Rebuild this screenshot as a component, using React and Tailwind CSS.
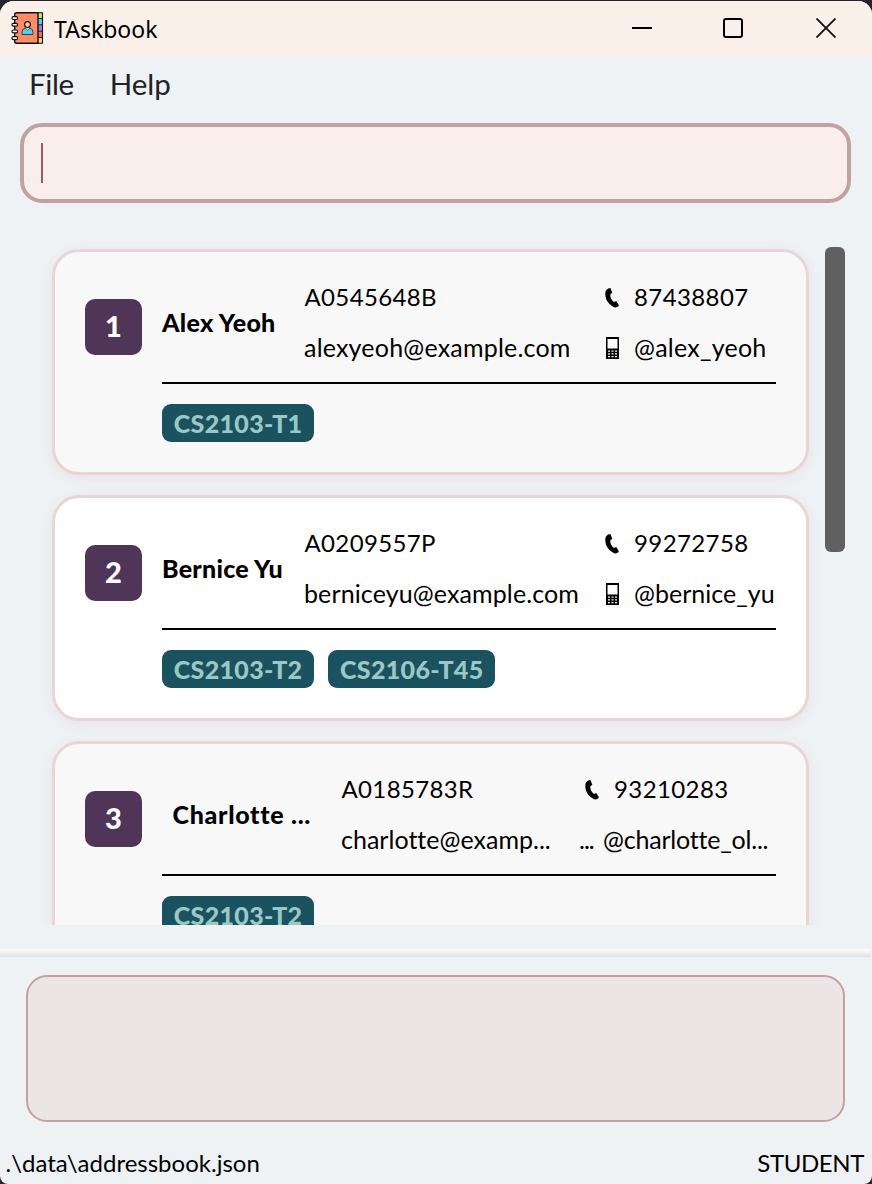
const students = [
  {
    index: 1,
    name: "Alex Yeoh",
    id: "A0545648B",
    email: "alexyeoh@example.com",
    phone: "87438807",
    handle: "@alex_yeoh",
    tags: ["CS2103-T1"],
    bg: "bg-[#f8f8f8]",
    nameCol: "w-[142px] tracking-[0.3px]",
    infoCol: "w-[299px]",
    emailText: "tracking-[0.2px]",
    handleText: "tracking-[0.25px]",
  },
  {
    index: 2,
    name: "Bernice Yu",
    id: "A0209557P",
    email: "berniceyu@example.com",
    phone: "99272758",
    handle: "@bernice_yu",
    tags: ["CS2103-T2", "CS2106-T45"],
    bg: "bg-white",
    nameCol: "w-[142px] tracking-[0.25px]",
    infoCol: "w-[299px]",
    emailText: "tracking-[0.12px]",
    handleText: "tracking-[0.02px]",
  },
  {
    index: 3,
    name: "Charlotte ...",
    id: "A0185783R",
    email: "charlotte@examp...",
    phone: "93210283",
    handle: "@charlotte_ol...",
    tags: ["CS2103-T2"],
    bg: "bg-[#f8f8f8]",
    nameCol: "w-[179px] pl-[10.500px] tracking-[0.7px]",
    infoCol: "w-[242px]",
    emailText: "tracking-[0.02px]",
    handleText: "tracking-[-0.2px]",
    truncated: true,
  },
];

function BookIcon() {
  return (
    <svg width="34" height="34" viewBox="0 0 34 34" className="ml-[10px] mb-[3px]">
      <path d="M28 1.5h4.5v31H28z" fill="#ffd35c" />
      <path d="M28 1.5h4.5v6H28z" fill="#cbe558" />
      <path d="M28 7.5h4.5v6.3H28z" fill="#4cd3ee" />
      <path d="M28 13.8h4.5v6.4H28z" fill="#a97fd0" />
      <path d="M28 20.2h4.5v6.3H28z" fill="#ff5c7c" />
      <path d="M28 7.5h4.5M28 13.8h4.5M28 20.2h4.5M28 26.5h4.5" stroke="#111" strokeWidth="0.9" />
      <path d="M28 1.7h4.500v30.600H28" fill="none" stroke="#111" strokeWidth="1.1" />
      <path d="M6.500 1.700h21.500v30.600h-21.500q-1.800 0-1.800-1.800v-27q0-1.800 1.800-1.800z" fill="#ff8c66" stroke="#111" strokeWidth="1.4" />
      <path d="M12 23.500v-2.200q0-3.600 3.200-4.100l2.300 1.900 2.300-1.900q3.200.5 3.200 4.100v2.200z" fill="#52d1ee" stroke="#1b3540" strokeWidth="0.9" />
      <path d="M16.200 16.200h2.600v1.900l-1.300 1-1.300-1z" fill="#ffc7ae" />
      <circle cx="17.5" cy="13.6" r="2.9" fill="#ffc7ae" stroke="#111" strokeWidth="1.2" />
      <g fill="#fff" stroke="#111" strokeWidth="1.2">
        <rect x="2" y="5.6" width="5.6" height="2.9" rx="1.4" />
        <rect x="2" y="12.3" width="5.6" height="2.9" rx="1.4" />
        <rect x="2" y="19" width="5.6" height="2.9" rx="1.4" />
        <rect x="2" y="25.7" width="5.6" height="2.9" rx="1.4" />
      </g>
    </svg>
  );
}

function PhoneIcon() {
  return (
    <svg width="14" height="20" viewBox="0 0 14 20">
      <path
        d="M3.2.5 5.4 0l1.9 4.7-2 1.5q-.2 2.7 1 4.7t2.6 3l2.3-.8 2.6 3.8-.6 1.6-2.4 1Q7.500 19.200 3.800 15.200T.3 5.500Q.3 2 3.200.5Z"
        fill="#000"
      />
    </svg>
  );
}

function MobileIcon() {
  return (
    <svg width="14" height="22" viewBox="0 0 14 22">
      <path d="M1 0h13v22H1zM2.500 2v9.500h10V2z" fill="#000" fillRule="evenodd" />
      <path
        d="M3 13.500h2v1.300H3zM6.500 13.500h2v1.300h-2zM10 13.500h2v1.300h-2zM3 16.200h2v1.300H3zM6.500 16.200h2v1.300h-2zM10 16.200h2v1.300h-2zM3 19h2v1.300H3zM6.500 19h2v1.300h-2zM10 19h2v1.300h-2z"
        fill="#f8f8f8"
      />
    </svg>
  );
}

function StudentCard({ s }) {
  return (
    <article
      className={`flex h-[226px] w-[757px] shrink-0 rounded-[27px] border-[3px] border-[#e8d6d6] pl-[30px] shadow-[0_3px_12px_rgba(200,160,160,0.18)] ${s.bg}`}
    >
      <div className="mt-[47px] flex h-14 w-[57px] items-center justify-center rounded-[10px] bg-[#4f3558] pb-[3px] text-[29px] font-black text-white">
        {s.index}
      </div>
      <div className="ml-5 flex w-[614px] flex-col pt-5">
        <div className="flex h-[110px] whitespace-nowrap">
          <div className={`flex h-[100px] items-center text-[25px] font-black ${s.nameCol}`}>{s.name}</div>
          <div className={`flex flex-col ${s.infoCol}`}>
            <div className="flex h-[50px] items-center pl-[0.5px] tracking-[0.35px]">{s.id}</div>
            <div className={`flex h-[50px] items-center text-[25px] ${s.emailText}`}>{s.email}</div>
          </div>
          <div className="flex flex-col">
            <div className="flex h-[50px] items-center pl-0.5 tracking-[0.4px]">
              <span className="w-[29px] pt-px">
                <PhoneIcon />
              </span>
              {s.phone}
            </div>
            <div className={`flex h-[50px] items-center text-[25px] ${s.handleText} ${s.truncated ? "-ml-[4px]" : "pl-0.5"}`}>
              {s.truncated ? (
                <span className="w-6 tracking-[-1px]">...</span>
              ) : (
                <span className="w-[29px] pt-px">
                  <MobileIcon />
                </span>
              )}
              {s.handle}
            </div>
          </div>
        </div>
        <div className="h-0.5 bg-black" />
        <div className="mt-5 flex gap-[14px]">
          {s.tags.map((t) => (
            <span
              key={t}
              className="flex h-[38px] items-center rounded-[9px] bg-[#1a535f] px-[11.800px] text-[25px] font-black tracking-[0.33px] text-[#9bc8c6]"
            >
              {t}
            </span>
          ))}
        </div>
      </div>
    </article>
  );
}

export default function App() {
  return (
    <div className="h-[1184px] w-[872px] bg-[#26232a] pt-px font-['Lato','Liberation_Sans',sans-serif] text-[24px] leading-none text-black">
      <div className="flex h-[1183px] flex-col overflow-hidden rounded-t-[14px] rounded-b-[8px] bg-[#eef2f5]">
        <header className="flex h-14 shrink-0 items-center bg-[#f9f1e9]">
          <BookIcon />
          <h1 className="ml-[10px] grow font-['Noto_Sans','Open_Sans',sans-serif] text-[23px]">TAskbook</h1>
          <svg width="20" height="20" viewBox="0 0 20 20" className="mb-[3px]">
            <path d="M0 10h20" stroke="#000" strokeWidth="2" />
          </svg>
          <svg width="20" height="20" viewBox="0 0 20 20" className="mb-[3px] ml-[71px]">
            <rect x="1" y="1" width="18" height="18" rx="2" fill="none" stroke="#000" strokeWidth="2" />
          </svg>
          <svg width="20" height="20" viewBox="0 0 20 20" className="mr-[36px] mb-[3px] ml-[73px]">
            <path d="m.5.5 19 19m0-19-19 19" stroke="#111" strokeWidth="1.800" />
          </svg>
        </header>

        <nav className="flex h-[66px] shrink-0 gap-[36px] pt-3 pl-[29px] text-[29.500px] text-[#222]">
          <span className="tracking-[-0.4px]">File</span>
          <span>Help</span>
        </nav>

        <div className="mx-5 mr-[21px] flex h-20 shrink-0 items-center rounded-[22px] border-4 border-[#c0a3a1] bg-[#faeeed] pl-[17px]">
          <div className="h-10 w-0.5 bg-[#946060]" />
        </div>

        <main className="mt-[22px] flex h-[700px] shrink-0">
          <div className="flex h-[700px] w-[825px] flex-col gap-5 overflow-hidden pt-6 pl-[52px]">
            {students.map((s) => (
              <StudentCard key={s.index} s={s} />
            ))}
          </div>
          <div className="mt-[22px] h-[305px] w-5 rounded-[6px] bg-[#606060]" />
        </main>

        <div className="mt-6 h-2 w-[871px] shrink-0 bg-linear-to-b from-[#fcfcfc] to-[#e2e2e2]" />

        <section className="mt-[18px] mr-[27px] ml-[26px] h-[147px] shrink-0 bg-[#f3f2f3]">
          <div className="h-full rounded-[21px] border-2 border-[#c0a3a1] bg-[#ebe6e5]" />
        </section>

        <footer className="mt-4 flex grow items-center justify-between border-t-2 border-[#f1f1f3] pt-px pr-2 pl-[5.500px]">
          <span>.\data\addressbook.json</span>
          <span className="tracking-[-0.4px]">STUDENT</span>
        </footer>
      </div>
    </div>
  );
}
